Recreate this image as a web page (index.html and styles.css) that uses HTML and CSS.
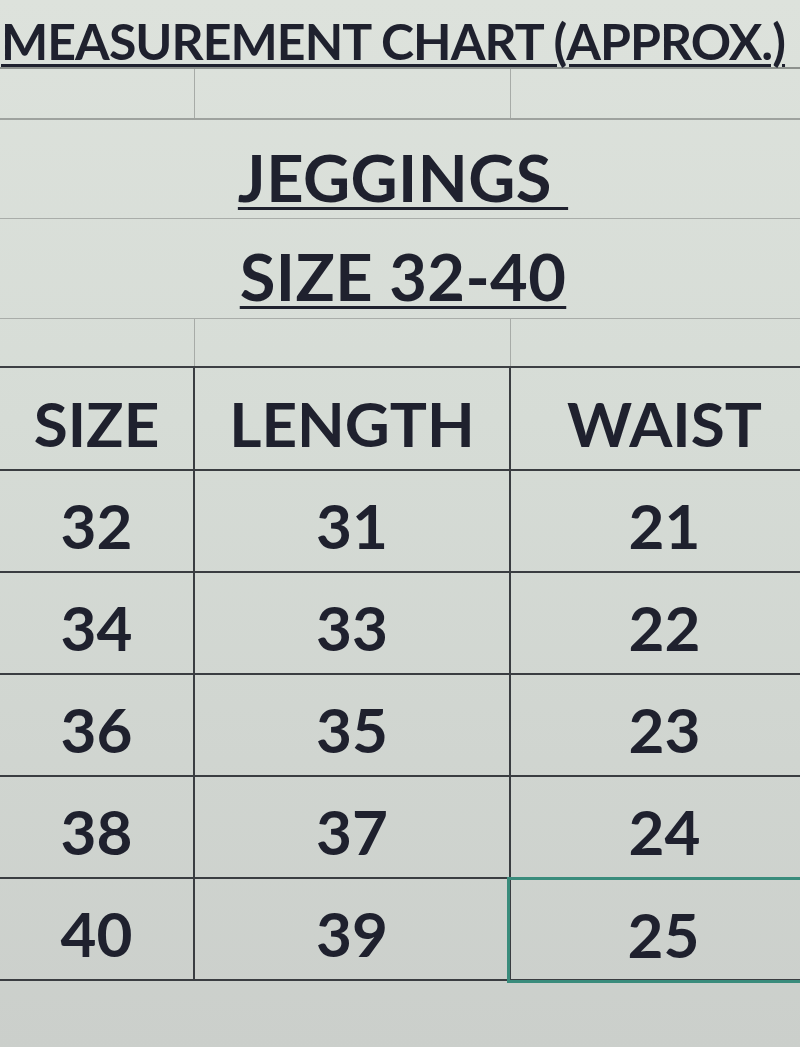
FILE: index.html
```html
<!DOCTYPE html>
<html>
<head>
<meta charset="utf-8">
<link rel="stylesheet" href="styles.css">
</head>
<body>
<div class="sheet">
  <div class="title-row"><span class="title">MEASUREMENT CHART (APPROX.)</span></div>
  <div class="grid-row blank-a"><div class="cell"></div><div class="cell"></div><div class="cell"></div></div>
  <div class="merged jeg"><span class="u">JEGGINGS&nbsp;</span></div>
  <div class="merged rng"><span class="u">SIZE 32-40</span></div>
  <div class="grid-row blank-b"><div class="cell"></div><div class="cell"></div><div class="cell"></div></div>
  <div class="table">
    <div class="grid-row head"><div class="cell c1">SIZE</div><div class="cell c2">LENGTH</div><div class="cell c3">WAIST</div></div>
    <div class="grid-row data"><div class="cell c1">32</div><div class="cell c2">31</div><div class="cell c3">21</div></div>
    <div class="grid-row data"><div class="cell c1">34</div><div class="cell c2">33</div><div class="cell c3">22</div></div>
    <div class="grid-row data"><div class="cell c1">36</div><div class="cell c2">35</div><div class="cell c3">23</div></div>
    <div class="grid-row data"><div class="cell c1">38</div><div class="cell c2">37</div><div class="cell c3">24</div></div>
    <div class="grid-row data"><div class="cell c1">40</div><div class="cell c2">39</div><div class="cell c3 selected">25</div></div>
  </div>
</div>
</body>
</html>
```

FILE: styles.css
```css
html, body {
  margin: 0;
  padding: 0;
  height: 100%;
  overflow: hidden;
}
* {
  box-sizing: border-box;
}
body {
  background: linear-gradient(180deg, #dde2dc 0%, #d6dcd6 40%, #cbcfcb 100%);
  font-family: "Lato", "Open Sans", sans-serif;
  font-weight: 700;
  color: #1f212e;
}
.sheet {
  width: 816px;
}
.title-row {
  height: 69px;
  border-bottom: 2px solid #8d918d;
  display: flex;
  align-items: flex-start;
}
.title {
  font-size: 50px;
  line-height: 1;
  padding-top: 16px;
  padding-left: 1px;
  text-decoration: underline;
  text-decoration-thickness: 3px;
  text-underline-offset: 4px;
  letter-spacing: -0.95px;
  white-space: nowrap;
}
.grid-row {
  display: grid;
  grid-template-columns: 195px 316px 305px;
}
.blank-a {
  height: 51px;
  border-bottom: 2px solid #9ea29e;
}
.blank-a .cell, .blank-b .cell {
  border-right: 1px solid #a7aba7;
}
.blank-b {
  height: 49px;
  border-bottom: 2px solid #3d4044;
}
.merged {
  border-bottom: 1px solid #a9ada9;
  display: flex;
  justify-content: center;
  align-items: flex-start;
  padding-right: 10px;
}
.jeg { height: 99px; }
.rng { height: 100px; }
.u {
  font-size: 65px;
  line-height: 1;
  padding-top: 25px;
  text-decoration: underline;
  text-decoration-thickness: 3px;
  text-underline-offset: 5px;
  letter-spacing: 0.4px;
  white-space: pre;
}
.table .grid-row {
  height: 102px;
  border-bottom: 2px solid #3a3d41;
}
.table .head {
  height: 103px;
}
.table .cell {
  display: flex;
  align-items: center;
  justify-content: center;
  font-size: 62px;
  line-height: 1;
  padding-top: 8px;
}
.table .c1, .table .c2 {
  border-right: 2px solid #3a3d41;
}
.table .c3 {
  padding-left: 2px;
}
.table .selected {
  outline: 3px solid #3a8c7c;
  outline-offset: -1px;
  margin-left: -2px;
  margin-bottom: -2px;
}
```
